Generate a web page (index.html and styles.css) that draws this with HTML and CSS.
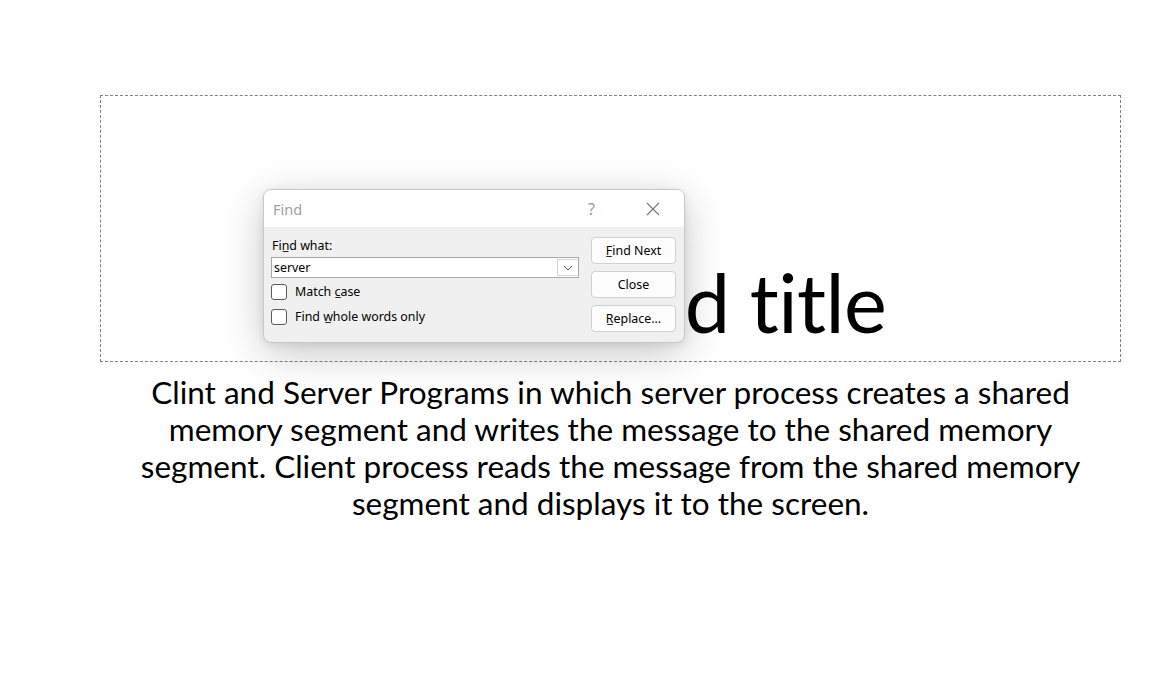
FILE: index.html
```html
<!DOCTYPE html>
<html>
<head>
<meta charset="utf-8">
<link rel="stylesheet" href="styles.css">
</head>
<body>
<div class="slide">
  <div class="title-box">
    <div class="title-text"><span class="title-hidden">Click to ad</span>d title</div>
  </div>
  <div class="body-text">
    <p>Clint and Server Programs in which server process creates a shared memory segment and writes the message to the shared memory segment. Client process reads the message from the shared memory segment and displays it to the screen.</p>
  </div>
</div>

<div class="dialog">
  <div class="dlg-titlebar">
    <span class="dlg-title">Find</span>
    <span class="dlg-help">?</span>
    <span class="dlg-close">
      <svg width="14" height="14" viewBox="0 0 14 14"><path d="M1 1L13 13M13 1L1 13" stroke="#777" stroke-width="1.1" fill="none"/></svg>
    </span>
  </div>
  <div class="dlg-body">
    <div class="dlg-left">
      <div class="label">Fin̲d what:</div>
      <div class="combo">
        <span class="combo-text">server</span>
        <span class="combo-btn">
          <svg width="10" height="6" viewBox="0 0 10 6"><path d="M1 1L5 5L9 1" stroke="#555" stroke-width="1" fill="none"/></svg>
        </span>
      </div>
      <div class="check"><span class="box"></span><span class="cl">Match c̲ase</span></div>
      <div class="check"><span class="box"></span><span class="cl">Find w̲hole words only</span></div>
    </div>
    <div class="dlg-right">
      <div class="btn">F̲ind Next</div>
      <div class="btn">Close</div>
      <div class="btn">R̲eplace...</div>
    </div>
  </div>
</div>
</body>
</html>
```

FILE: styles.css
```css
html, body {
  margin: 0;
  padding: 0;
  background: #fff;
}
body {
  width: 1162px;
  height: 700px;
  position: relative;
  overflow: hidden;
  font-family: "Lato", "Open Sans", sans-serif;
}
.slide {
  padding: 95px 0 0 100px;
}
.title-box {
  width: 1019px;
  height: 265px;
  border: 1px dashed #808080;
  display: flex;
  align-items: flex-end;
  justify-content: center;
  box-sizing: content-box;
}
.title-text {
  font-size: 81px;
  line-height: 1;
  color: #000;
  padding-bottom: 19px;
  letter-spacing: -0.6px;
  white-space: nowrap;
}
.title-hidden {
  display: inline-block;
  width: 350px;
  vertical-align: bottom;
  letter-spacing: -9px;
}
.body-text {
  width: 1021px;
  text-align: center;
  margin-top: 12px;
}
.body-text p {
  margin: 0 auto;
  width: 970px;
  font-size: 31.5px;
  line-height: 37px;
  color: #000;
}

.dialog {
  position: absolute;
  left: 263px;
  top: 189px;
  width: 420px;
  height: 152px;
  border: 1px solid #c8c8c8;
  border-radius: 8px;
  background: #f0f0f0;
  box-shadow: 0 10px 40px rgba(0,0,0,0.22), 0 2px 8px rgba(0,0,0,0.08);
  overflow: hidden;
  font-family: "Noto Sans", "Open Sans", sans-serif;
  font-size: 12.4px;
  color: #000;
}
.dlg-titlebar {
  height: 37px;
  background: #fff;
  display: flex;
  align-items: center;
  padding-left: 9px;
}
.dlg-title {
  font-size: 14.5px;
  color: #a0a0a0;
  flex: 1;
}
.dlg-help {
  font-size: 16px;
  color: #999;
  width: 20px;
  margin-right: 38px;
}
.dlg-close {
  width: 16px;
  margin-right: 22px;
  display: flex;
}
.dlg-body {
  display: flex;
  padding: 10px 8px 0 7px;
}
.dlg-left {
  width: 308px;
}
.label {
  height: 17px;
  line-height: 17px;
  margin-left: 1px;
}
.combo {
  margin-top: 3px;
  height: 19px;
  border: 1px solid #a8a8a8;
  background: #fff;
  display: flex;
  align-items: center;
}
.combo-text {
  flex: 1;
  padding-left: 2px;
}
.combo-btn {
  width: 20px;
  height: 17px;
  margin-right: 1px;
  border: 1px solid #d4d4d4;
  border-right: none;
  box-sizing: border-box;
  display: flex;
  align-items: center;
  justify-content: center;
}
.check {
  display: flex;
  align-items: center;
  height: 25px;
}
.combo + .check {
  margin-top: 1px;
}
.box {
  width: 14px;
  height: 14px;
  border: 1px solid #5a5a5a;
  border-radius: 3px;
  background: #fff;
  margin-right: 8px;
  flex: none;
}
.dlg-right {
  margin-left: 12px;
}
.btn {
  width: 83px;
  height: 25px;
  border: 1px solid #d0d0d0;
  border-radius: 4px;
  background: #fdfdfd;
  display: flex;
  align-items: center;
  justify-content: center;
  margin-bottom: 7px;
}
```
